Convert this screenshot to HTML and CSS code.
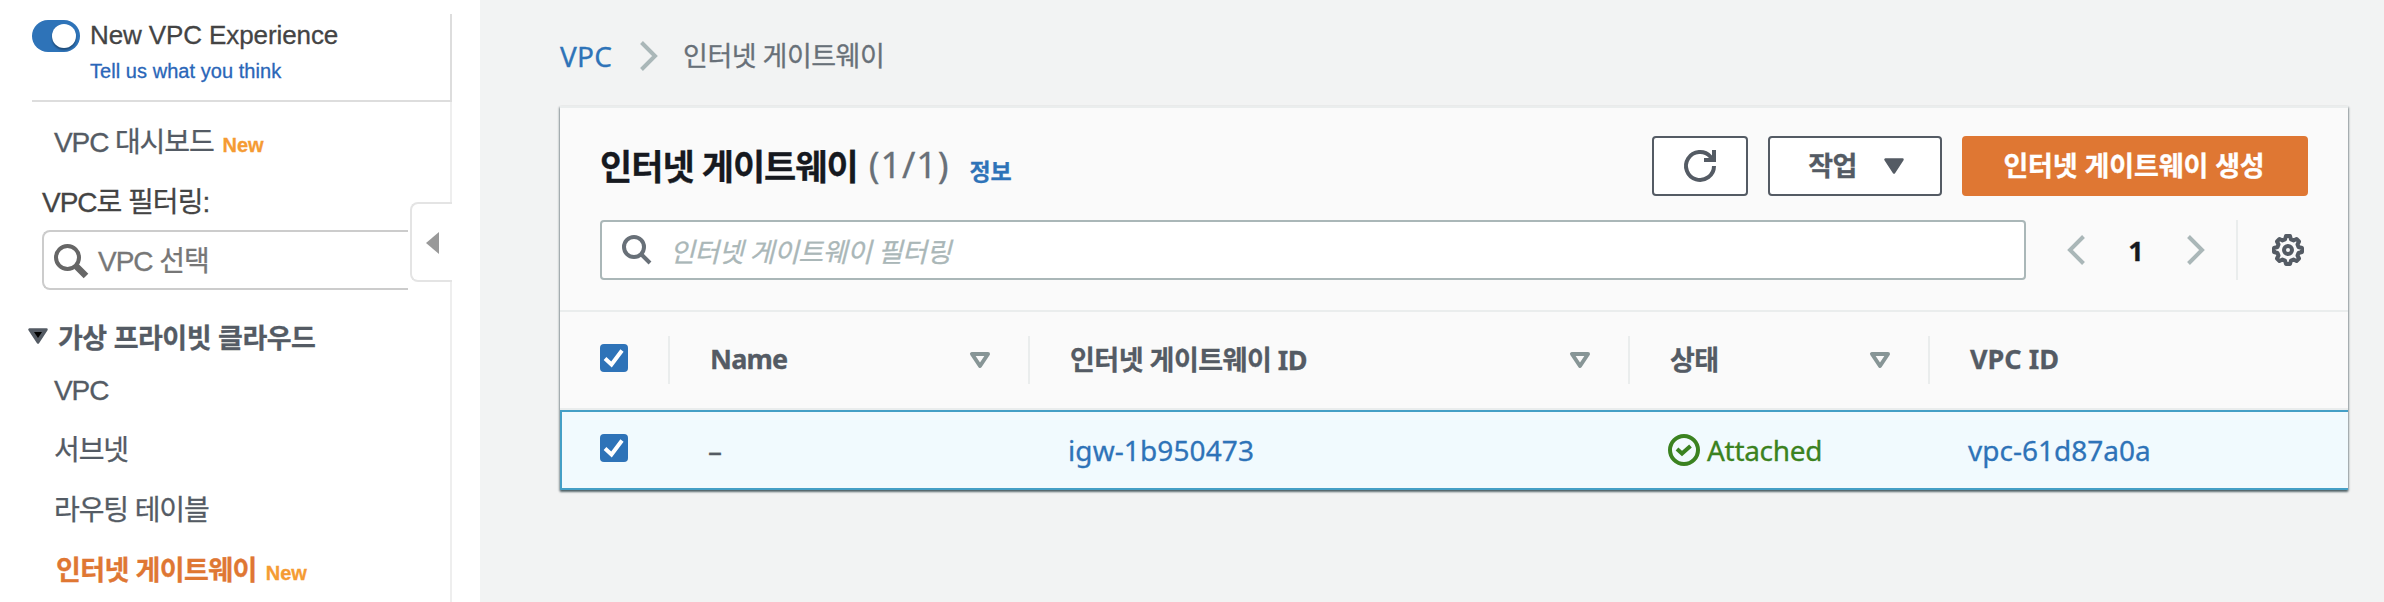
FILE: index.html
```html
<!DOCTYPE html>
<html lang="ko">
<head>
<meta charset="utf-8">
<title>인터넷 게이트웨이</title>
<link rel="stylesheet" href="styles.css">
</head>
<body>
<div class="app">
  <aside class="sidebar">
    <div class="nav">
      <div class="experience">
        <span class="toggle"><span class="knob"></span></span>
        <div class="experience-text">
          <span class="experience-title">New VPC Experience</span>
          <a class="feedback">Tell us what you think</a>
        </div>
      </div>
      <div class="nav-body">
        <a class="nav-item">VPC 대시보드<span class="new">New</span></a>
        <div class="filter-label">VPC로 필터링:</div>
        <div class="vpc-select">
          <svg width="34" height="34" viewBox="0 0 34 34" fill="none" stroke="#666"><circle cx="13.5" cy="13.5" r="11.5" stroke-width="4"/><path d="M22.5 22.500l9.500 9.500" stroke-width="6.500"/></svg>
          <span>VPC 선택</span>
        </div>
        <div class="nav-group">
          <svg width="20" height="16" viewBox="0 0 20 16"><path d="M1.500 1.500h17L10 14.500z" fill="#545b64" stroke="#545b64" stroke-width="2.500" stroke-linejoin="round"/><path d="M6 4h8l-4 6z" fill="#000"/></svg>
          <span>가상 프라이빗 클라우드</span>
        </div>
        <a class="nav-item">VPC</a>
        <a class="nav-item">서브넷</a>
        <a class="nav-item">라우팅 테이블</a>
        <a class="nav-item active">인터넷 게이트웨이<span class="new">New</span></a>
      </div>
      <div class="collapse"><svg width="13" height="22" viewBox="0 0 13 22"><path d="M13 0v22L0 11z" fill="#999"/></svg></div>
    </div>
  </aside>
  <main class="main">
    <nav class="crumbs">
      <a class="link crumb-root">VPC</a>
      <svg width="20" height="32" viewBox="0 0 20 32" fill="none" stroke="#aab7b8" stroke-width="4"><path d="M2.500 2.500L16 16 2.500 29.500"/></svg>
      <span>인터넷 게이트웨이</span>
    </nav>
    <section class="panel">
      <header class="panel-head">
        <h1 class="title">인터넷 게이트웨이</h1>
        <span class="count">(1/1)</span>
        <a class="info">정보</a>
        <div class="actions">
          <button class="btn refresh"><svg width="32" height="32" viewBox="0 0 32 32" fill="none" stroke="#545b64" stroke-width="4"><path d="M30 16A14 14 0 1 1 26.500 6.700L29 10"/><path d="M20 10h10V0"/></svg></button>
          <button class="btn work"><span>작업</span><svg width="20" height="16" viewBox="0 0 20 16"><path d="M1.500 1.500h17L10 14.500z" fill="#545b64" stroke="#545b64" stroke-width="2.500" stroke-linejoin="round"/></svg></button>
          <button class="btn create"><span>인터넷 게이트웨이 생성</span></button>
        </div>
      </header>
      <div class="tools">
        <div class="search">
          <svg width="30" height="30" viewBox="0 0 30 30" fill="none" stroke="#687078" stroke-width="4"><circle cx="12" cy="12" r="10"/><path d="M19 19l9 9"/></svg>
          <span>인터넷 게이트웨이 필터링</span>
        </div>
        <div class="pager">
          <svg width="20" height="32" viewBox="0 0 20 32" fill="none" stroke="#aab7b8" stroke-width="4"><path d="M17.500 2.500L4 16l13.500 13.500"/></svg>
          <span class="page">1</span>
          <svg width="20" height="32" viewBox="0 0 20 32" fill="none" stroke="#aab7b8" stroke-width="4"><path d="M2.500 2.500L16 16 2.500 29.500"/></svg>
        </div>
        <div class="settings">
          <svg width="32" height="32" viewBox="0 0 32 32" fill="none" stroke="#545b64"><path stroke-width="4" stroke-linejoin="round" d="M14 2h4l1 3.500 2.500 1 3-1.500 2.500 2.500-1.500 3 1 2.500L30 14v4l-3.500 1-1 2.500 1.500 3-2.500 2.500-3-1.500-2.500 1L18 30h-4l-1-3.500-2.500-1-3 1.500L5 24.500l1.500-3-1-2.500L2 18v-4l3.500-1 1-2.500-1.500-3L7.500 5l3 1.500 2.500-1z"/><circle cx="16" cy="16" r="4" stroke-width="4"/></svg>
        </div>
      </div>
      <div class="grid head">
        <div class="cell check"><span class="box"><svg width="28" height="28" viewBox="0 0 28 28" fill="none" stroke="#fff" stroke-width="4"><path d="M5 14.500l6.500 6L22 6.500"/></svg></span></div>
        <div class="cell"><span class="name-h">Name</span><svg class="sort" width="20" height="16" viewBox="0 0 20 16"><path d="M2 2h16l-8 12z" fill="none" stroke="#879596" stroke-width="4" stroke-linejoin="round"/></svg></div>
        <div class="cell"><span class="id-h">인터넷 게이트웨이 ID</span><svg class="sort" width="20" height="16" viewBox="0 0 20 16"><path d="M2 2h16l-8 12z" fill="none" stroke="#879596" stroke-width="4" stroke-linejoin="round"/></svg></div>
        <div class="cell"><span class="state-h">상태</span><svg class="sort" width="20" height="16" viewBox="0 0 20 16"><path d="M2 2h16l-8 12z" fill="none" stroke="#879596" stroke-width="4" stroke-linejoin="round"/></svg></div>
        <div class="cell"><span class="vpc-h">VPC ID</span></div>
      </div>
      <div class="grid row">
        <div class="cell check"><span class="box"><svg width="28" height="28" viewBox="0 0 28 28" fill="none" stroke="#fff" stroke-width="4"><path d="M5 14.500l6.500 6L22 6.500"/></svg></span></div>
        <div class="cell"><span class="dash">–</span></div>
        <div class="cell"><a class="link igw">igw-1b950473</a></div>
        <div class="cell status"><svg width="32" height="32" viewBox="0 0 32 32" fill="none" stroke="#3b8220" stroke-width="4"><circle cx="16" cy="16" r="14"/><path d="M9 15l5 4.500 8.500-7.500"/></svg><span>Attached</span></div>
        <div class="cell"><a class="link vpcid">vpc-61d87a0a</a></div>
      </div>
    </section>
  </main>
</div>
</body>
</html>
```
FILE: styles.css
```css
* { box-sizing: border-box; }
body {
  margin: 0;
  background: #f2f3f3;
  font-family: "Noto Sans", "Noto Sans CJK KR", sans-serif;
  color: #545b64;
  -webkit-text-stroke-width: .3px;
}
svg { display: block; flex: none; overflow: visible; }
.app { display: flex; height: 602px; overflow: hidden; white-space: nowrap; }
.link { color: #2e73b8; }

.sidebar {
  width: 480px;
  flex: none;
  background: #fff;
  padding-top: 14px;
  font-family: "Liberation Sans", "Noto Sans CJK KR", sans-serif;
}
.nav { position: relative; width: 452px; height: 588px; display: flex; flex-direction: column; }
.experience {
  display: flex;
  gap: 10px;
  height: 88px;
  margin-left: 32px;
  padding-top: 6px;
  border-right: 2px solid #ddd;
  border-bottom: 2px solid #ddd;
}
.toggle { width: 48px; height: 32px; border-radius: 16px; background: #2e73b8; padding: 4px 4px 4px 20px; }
.knob { display: block; width: 24px; height: 24px; border-radius: 50%; background: #fff; box-shadow: 0 2px 2px rgba(0, 0, 0, .35); }
.experience-text { display: flex; flex-direction: column; }
.experience-title { font-size: 26px; line-height: 30px; color: #444; letter-spacing: -.1px; }
.feedback { font-size: 20px; line-height: 30px; margin-top: 6px; color: #2a66b8; letter-spacing: .05px; }
.nav-body { flex: 1; border-right: 2px solid #eee; padding-top: 11px; }
.nav-item { display: flex; align-items: baseline; height: 60px; line-height: 60px; padding-left: 54px; font-size: 28px; letter-spacing: -1.1px; }
.new { font-size: 20px; font-weight: bold; color: #f59b33; margin-left: 9px; letter-spacing: -.1px; }
.filter-label { height: 57px; line-height: 60px; padding-left: 42px; font-size: 28px; color: #444; letter-spacing: -1px; }
.vpc-select {
  display: flex;
  align-items: center;
  gap: 10px;
  width: 366px;
  height: 60px;
  margin-left: 42px;
  padding: 2px 0 0 10px;
  border: 2px solid #ccc;
  border-right: 0;
  border-radius: 8px 0 0 8px;
  color: #777;
  font-size: 28px;
  letter-spacing: -1px;
}
.vpc-select span { padding-bottom: 5px; }
.nav-group { display: flex; align-items: center; gap: 10px; height: 43px; margin: 28px 0 0 28px; padding-bottom: 6px; font-size: 27px; font-weight: bold; letter-spacing: -.5px; }
.nav-group svg { margin-top: -1px; }
.nav-item.active { padding-left: 56px; color: #df7733; font-size: 27px; font-weight: bold; letter-spacing: -.6px; }
.collapse {
  position: absolute;
  left: 410px;
  top: 188px;
  width: 42px;
  height: 80px;
  padding: 28px 0 0 14px;
  background: #fff;
  border: 2px solid #e4e4e4;
  border-right: 0;
  border-radius: 8px 0 0 8px;
}

.main { flex: 1; padding: 28px 36px 0 80px; }
.crumbs { display: flex; align-items: center; height: 56px; font-size: 27px; line-height: 54px; padding-bottom: 1px; color: #687078; letter-spacing: -.5px; }
.crumb-root { font-size: 28px; letter-spacing: .2px; }
.crumbs svg { margin: 0 24px 0 27px; }
.panel {
  margin-top: 22px;
  width: 1788px;
  border-top: 2px solid #eaeded;
  background: #fafafa;
  box-shadow: 0 2px 2px rgba(0, 28, 36, .5), 1px 1px 2px rgba(0, 28, 36, .25), -1px 1px 2px rgba(0, 28, 36, .25);
}
.panel-head { display: flex; align-items: center; height: 88px; padding: 28px 40px 0; }
.title { margin: -4px 0 0; font-size: 35px; font-weight: bold; color: #16191f; letter-spacing: -1px; }
.count { font-size: 36px; color: #687078; margin: -3px 0 0 11px; letter-spacing: .9px; }
.info { font-size: 23px; font-weight: bold; color: #2e73b8; margin: 7px 0 0 20px; }
.actions { display: flex; gap: 20px; margin-left: auto; }
.btn {
  display: flex;
  align-items: center;
  justify-content: center;
  height: 60px;
  padding: 0;
  border: 2px solid #545b64;
  border-radius: 4px;
  background: #fff;
  color: #545b64;
  font: bold 27px "Noto Sans", "Noto Sans CJK KR", sans-serif;
  letter-spacing: -.5px;
}
.btn span { padding-bottom: 3px; }
.refresh { width: 96px; }
.work { width: 174px; gap: 27px; padding-left: 2px; }
.create { width: 346px; padding-right: 2px; border-color: #df7733; background: #df7733; color: #fff; letter-spacing: -.1px; }
.tools { display: flex; align-items: center; height: 116px; padding: 0 40px 6px; border-bottom: 2px solid #eaeded; }
.search {
  display: flex;
  align-items: center;
  gap: 18px;
  width: 1426px;
  height: 60px;
  padding-left: 20px;
  border: 2px solid #aab7b8;
  border-radius: 4px;
  background: #fff;
  color: #aab7b8;
  font-size: 27px;
  font-style: italic;
  letter-spacing: -.5px;
}
.pager { display: flex; align-items: center; justify-content: space-between; width: 140px; margin-left: 40px; }
.page { font-size: 27px; font-weight: bold; color: #16191f; }
.settings { display: flex; align-items: center; height: 60px; margin-left: 30px; padding-left: 34px; border-left: 2px solid #eaeded; }
.grid { display: grid; grid-template-columns: 108px 360px 600px 300px 420px; }
.head { height: 98px; padding: 24px 0; border-bottom: 2px solid #eaeded; font-size: 27px; font-weight: bold; }
.cell { display: flex; align-items: center; }
.head .cell { height: 48px; padding: 0 38px 0 40px; border-left: 2px solid #eaeded; }
.head .cell > span:not(.box) { margin-top: -3px; }
.head .check { border-left: 0; padding: 0 0 4px 40px; }
.name-h { letter-spacing: -.8px; }
.id-h { letter-spacing: -.5px; }
.state-h { letter-spacing: -.5px; }
.sort { margin-left: auto; }
.box { width: 28px; height: 28px; border-radius: 4px; background: #2e73b8; }
.row { height: 80px; background: #f1fafe; border: solid #449fc6; border-width: 2px 0 2px 2px; font-size: 28px; }
.row .cell { padding: 0 0 1px 38px; }
.row .igw { letter-spacing: .1px; }
.row .check { padding: 0 0 4px 38px; }
.row .status { gap: 7px; color: #3b8220; letter-spacing: -.3px; }
```
